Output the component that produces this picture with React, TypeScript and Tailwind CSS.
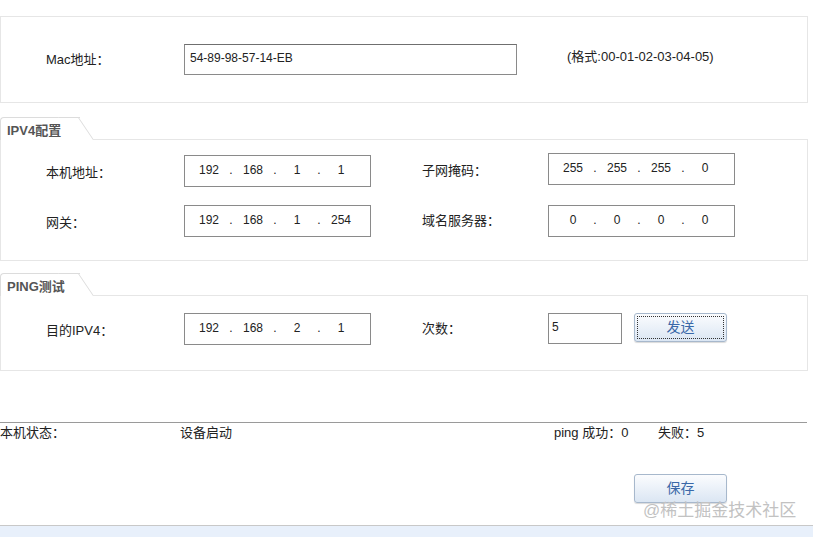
const font = "font-['Liberation_Sans','Noto_Sans_CJK_SC',sans-serif]";

function IpBox({ parts }: { parts: string[] }) {
  return (
    <div className="flex h-[32px] w-[187px] items-center border border-[#8a8a8a] bg-white pb-[3px] pl-[7px] text-[12px] text-[#222]">
      {parts.map((p, i) => (
        <div key={i} className="flex items-center">
          {i > 0 && <span className="w-[10px] text-center">.</span>}
          <span className="w-[34px] text-center">{p}</span>
        </div>
      ))}
    </div>
  );
}

function Tab({ title }: { title: string }) {
  return (
    <div className="relative z-10 -mb-px flex">
      <div className="flex h-[23px] w-[80px] items-center rounded-tl-[4px] border-l border-t border-[#dcdcdc] bg-white pl-[6px] pt-[3px] text-[13px] font-bold text-[#555]">
        {title}
      </div>
      <div className="relative h-[23px] w-[16px]">
        <div className="absolute inset-y-0 left-[-6px] w-[20px] origin-bottom skew-x-[34deg] border-r border-t border-[#dcdcdc] bg-white" />
      </div>
    </div>
  );
}

function Label({ text, wide }: { text: string; wide?: boolean }) {
  return <div className={wide ? 'w-[183px] pl-[45px] pt-[8px]' : 'ml-[51px] w-[126px] pt-[6px]'}>{text}</div>;
}

function Button({ text, focus }: { text: string; focus?: boolean }) {
  return (
    <button className="flex h-[29px] w-[93px] items-center justify-center rounded-[3px] border border-[#a7b8cc] bg-gradient-to-b from-[#fbfcfe] to-[#dbe6f3] p-[2px] text-[14px] text-[#3a68a8] shadow-[0_1px_1px_rgba(0,0,0,0.15)]">
      <span className={`flex h-full w-full items-center justify-center ${focus ? 'border border-dotted border-[#333]' : ''}`}>{text}</span>
    </button>
  );
}

export default function App() {
  return (
    <div className={`relative flex h-[537px] w-[813px] flex-col overflow-hidden bg-white text-[13px] text-[#222] ${font}`}>
      {/* Mac */}
      <div className="mr-[5px] mt-[16px] flex h-[87px] items-center border border-[#e6e6e6]">
        <div className="w-[183px] pl-[45px]">Mac地址：</div>
        <div className="flex h-[31px] w-[333px] items-center border border-[#8a8a8a] border-t-[#6f6f6f] pb-[4px] pl-[5px] text-[12px]">
          54-89-98-57-14-EB
        </div>
        <div className="ml-[50px] -mt-[6px]">(格式:00-01-02-03-04-05)</div>
      </div>

      {/* IPV4 */}
      <div className="mt-[14px] mr-[5px]">
        <Tab title="IPV4配置" />
        <div className="flex h-[122px] flex-col gap-[18px] border border-[#e6e6e6] pt-[15px]">
          <div className="flex items-start">
            <Label text="本机地址：" wide />
            <IpBox parts={['192', '168', '1', '1']} />
            <Label text="子网掩码：" />
            <div className="-mt-[2px]">
              <IpBox parts={['255', '255', '255', '0']} />
            </div>
          </div>
          <div className="flex items-start">
            <Label text="网关：" wide />
            <IpBox parts={['192', '168', '1', '254']} />
            <Label text="域名服务器：" />
            <IpBox parts={['0', '0', '0', '0']} />
          </div>
        </div>
      </div>

      {/* PING */}
      <div className="mt-[12px] mr-[5px]">
        <Tab title="PING测试" />
        <div className="flex h-[76px] items-start border border-[#e6e6e6] pt-[17px]">
          <Label text="目的IPV4：" wide />
          <IpBox parts={['192', '168', '2', '1']} />
          <Label text="次数：" />
          <div className="flex h-[31px] w-[74px] items-center border border-[#8a8a8a] pb-[4px] pl-[3px] text-[12px]">5</div>
          <div className="ml-[12px]">
            <Button text="发送" focus />
          </div>
        </div>
      </div>

      {/* Status */}
      <div className="mr-[6px] mt-[51px] flex h-[20px] items-center border-t border-[#9a9a9a]">
        <div className="w-[180px]">本机状态：</div>
        <div className="w-[374px]">设备启动</div>
        <div className="w-[104px]">ping 成功：0</div>
        <div>失败：5</div>
      </div>

      <div className="ml-[634px] mt-[32px]">
        <Button text="保存" />
      </div>

      <div className="mt-auto h-[12px] border-t border-[#c8c8c8] bg-[#e8f0fb]" />

      <div className="absolute left-[643px] top-[498px] text-[17px] text-[#c2c2c2]">@稀土掘金技术社区</div>
    </div>
  );
}
